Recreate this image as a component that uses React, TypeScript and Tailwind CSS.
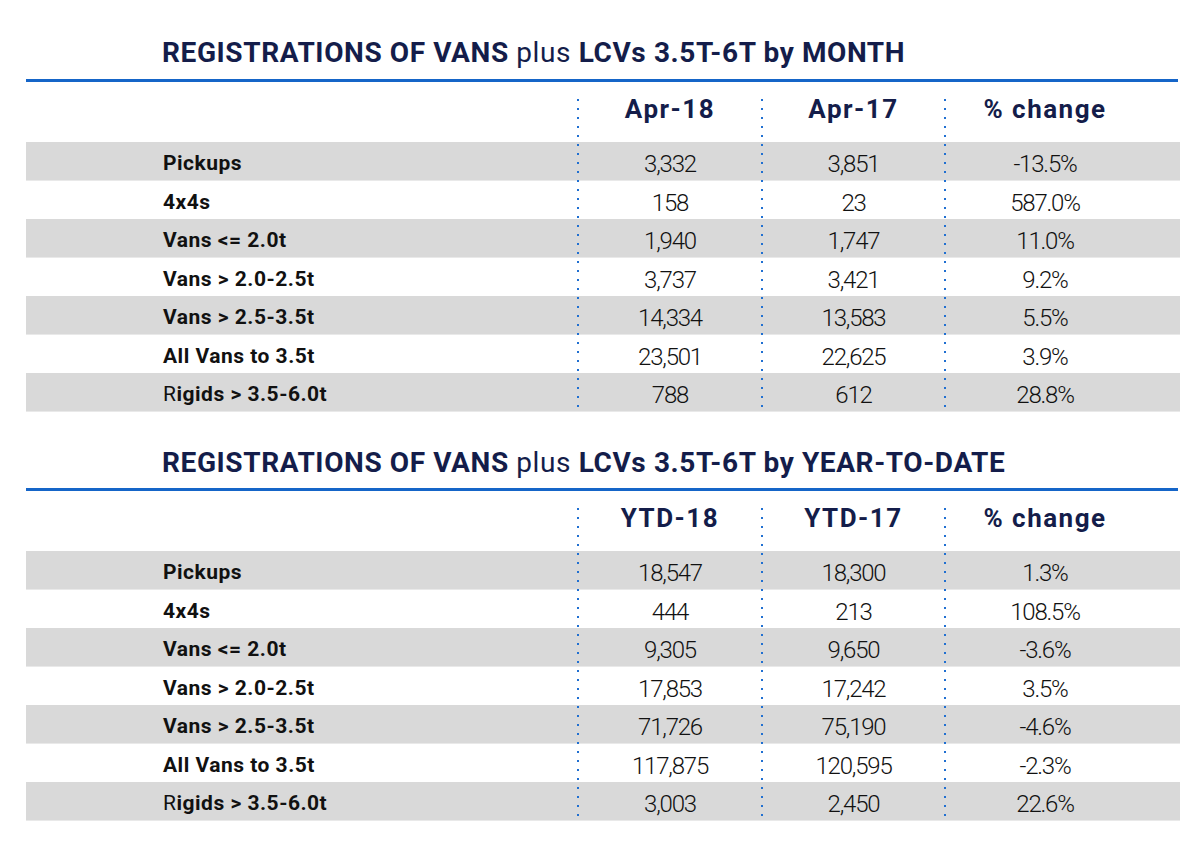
import React from "react";

type Row = { label: React.ReactNode; a: string; b: string; c: string };

const rowsMonth: Row[] = [
  { label: "Pickups", a: "3,332", b: "3,851", c: "-13.5%" },
  { label: "4x4s", a: "158", b: "23", c: "587.0%" },
  { label: "Vans <= 2.0t", a: "1,940", b: "1,747", c: "11.0%" },
  { label: "Vans > 2.0-2.5t", a: "3,737", b: "3,421", c: "9.2%" },
  { label: "Vans > 2.5-3.5t", a: "14,334", b: "13,583", c: "5.5%" },
  { label: "All Vans to 3.5t", a: "23,501", b: "22,625", c: "3.9%" },
  { label: "RIGIDS", a: "788", b: "612", c: "28.8%" },
];

const rowsYtd: Row[] = [
  { label: "Pickups", a: "18,547", b: "18,300", c: "1.3%" },
  { label: "4x4s", a: "444", b: "213", c: "108.5%" },
  { label: "Vans <= 2.0t", a: "9,305", b: "9,650", c: "-3.6%" },
  { label: "Vans > 2.0-2.5t", a: "17,853", b: "17,242", c: "3.5%" },
  { label: "Vans > 2.5-3.5t", a: "71,726", b: "75,190", c: "-4.6%" },
  { label: "All Vans to 3.5t", a: "117,875", b: "120,595", c: "-2.3%" },
  { label: "RIGIDS", a: "3,003", b: "2,450", c: "22.6%" },
];

function Label({ label }: { label: React.ReactNode }) {
  if (label === "RIGIDS") {
    return (
      <span>
        <span className="font-normal">R</span>igids &gt; 3.5-6.0t
      </span>
    );
  }
  return <span>{label}</span>;
}

function Dots({ left }: { left: string }) {
  return (
    <div
      className={`absolute top-[17px] bottom-0 w-[2px] ${left} bg-[linear-gradient(to_bottom,#1f6fd1_2px,transparent_2px)] bg-[length:2px_9px]`}
    />
  );
}

function Section({
  title,
  cols,
  rows,
  first,
}: {
  title: string;
  cols: [string, string, string];
  rows: Row[];
  first: boolean;
}) {
  return (
    <section>
      <div
        className={`${first ? "pt-[39px] pb-[12px]" : "pt-[37px] pb-[11px]"} pl-[162px] text-[28px] leading-[28px] text-[#141d4a] font-bold tracking-[0.6px]`}
      >
        REGISTRATIONS OF VANS <span className="font-normal">plus</span> {title}
      </div>
      <div className="ml-[26px] w-[1152px] h-[3px] bg-[#1565c8]" />
      <div className="relative ml-[26px] w-[1154px]">
        <div className="grid grid-cols-[552px_184px_183px_200px_1fr] h-[60px] text-[26px] leading-[26px] font-bold text-[#141d4a] tracking-[1.5px]">
          <div />
          <div className="pt-[14px] text-center">{cols[0]}</div>
          <div className="pt-[14px] text-center">{cols[1]}</div>
          <div className="pt-[14px] text-center">{cols[2]}</div>
          <div />
        </div>
        {rows.map((r, i) => {
          const gray = i % 2 === 0;
          return (
            <div
              key={i}
              className={`grid grid-cols-[552px_184px_183px_200px_1fr] items-center pt-[4px] ${
                gray ? "h-[39px] bg-[#d9d9d9] border-b border-[#e9e9e9]" : "h-[38px] bg-white"
              } text-[#111]`}
            >
              <div className="pl-[137px] text-[21px] font-bold tracking-[0.5px]">
                <Label label={r.label} />
              </div>
              <div className="text-center text-[24px] font-light tracking-[-1.2px]">{r.a}</div>
              <div className="text-center text-[24px] font-light tracking-[-1.2px]">{r.b}</div>
              <div className="text-center text-[24px] font-light tracking-[-1.2px]">{r.c}</div>
              <div />
            </div>
          );
        })}
        <Dots left="left-[551px]" />
        <Dots left="left-[735px]" />
        <Dots left="left-[918px]" />
      </div>
    </section>
  );
}

export default function App() {
  return (
    <div className="w-[1200px] h-[863px] bg-white overflow-hidden font-['Roboto',sans-serif]">
      <Section
        first
        title="LCVs 3.5T-6T by MONTH"
        cols={["Apr-18", "Apr-17", "% change"]}
        rows={rowsMonth}
      />
      <Section
        first={false}
        title="LCVs 3.5T-6T by YEAR-TO-DATE"
        cols={["YTD-18", "YTD-17", "% change"]}
        rows={rowsYtd}
      />
    </div>
  );
}
